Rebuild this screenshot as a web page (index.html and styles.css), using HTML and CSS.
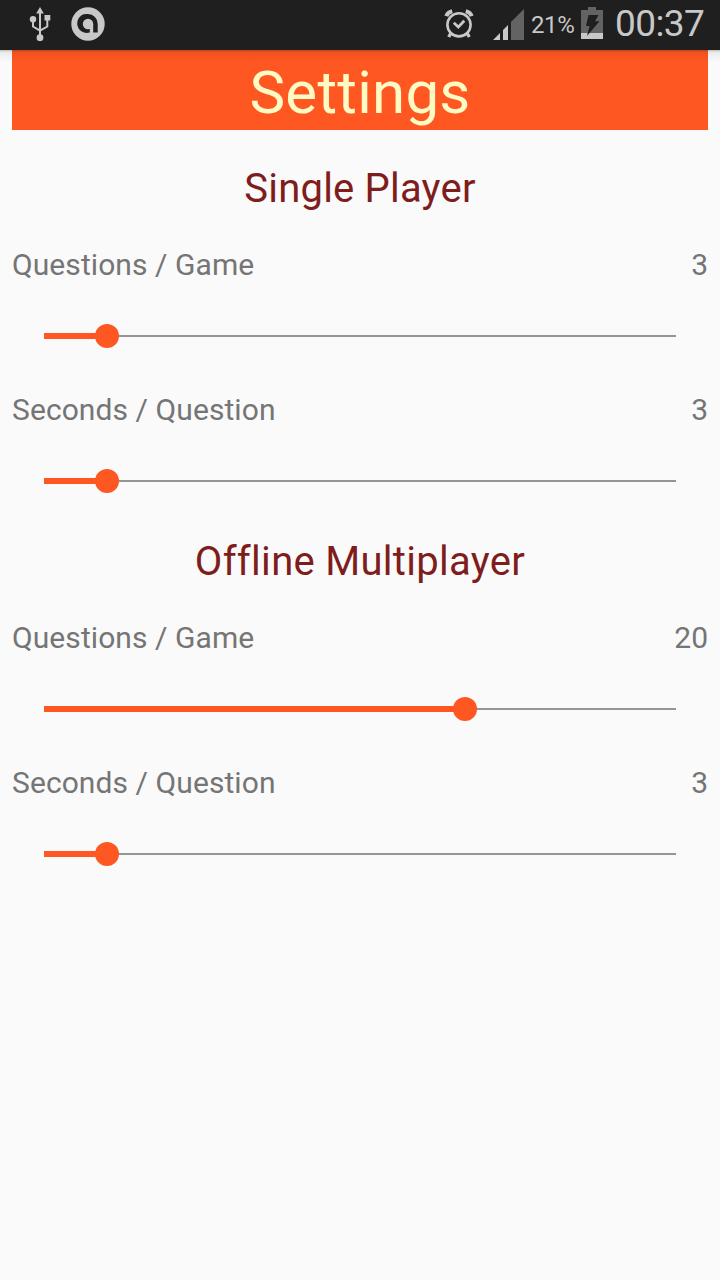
FILE: index.html
```html
<!DOCTYPE html>
<html lang="en">
<head>
<meta charset="utf-8">
<title>Settings</title>
<link rel="stylesheet" href="styles.css">
</head>
<body>
<div class="status-bar">
  <svg class="usb" width="22" height="36" viewBox="0 0 22 36" fill="#c8c8c8">
    <path d="M11 1l3.800 6.500h-7.600z"/>
    <circle cx="4" cy="13.300" r="3.200"/>
    <rect x="15.500" y="9" width="5.800" height="5.500"/>
    <circle cx="11" cy="31.700" r="3.400"/>
    <path d="M11 6v24M4 14v6.500l7 4.200M18.300 13v7.500l-7.300 4.200" fill="none" stroke="#c8c8c8" stroke-width="2"/>
  </svg>
  <svg class="app" width="34" height="34" viewBox="0 0 34 34">
    <circle cx="17" cy="17" r="16.700" fill="#c8c8c8"/>
    <path d="M17 7A9.800 9.800 0 0 1 26.700 17V25.500H18.500A9.500 9.500 0 1 1 17 7z" fill="#1f1f1f"/>
    <circle cx="17" cy="17" r="5.200" fill="#c8c8c8"/>
    <path d="M18.800 17h3.400v10h-3.400z" fill="#c8c8c8"/>
  </svg>
  <div class="spacer"></div>
  <svg class="alarm" width="30" height="30" viewBox="0 0 30 30" fill="none" stroke="#c8c8c8">
    <circle cx="15" cy="15.800" r="11.600" stroke-width="2.600"/>
    <path d="M9.800 13.700l4.500 4.300 6-6.300" stroke-width="2.700"/>
    <path d="M2.300 7.200Q3.500 3.300 8.200 2.100M27.700 7.200Q26.500 3.300 21.800 2.100" stroke-width="4"/>
    <path d="M7 24l-2.300 4M23 24l2.300 4" stroke-width="3.300"/>
  </svg>
  <svg class="signal" width="31" height="32" viewBox="0 0 31 32">
    <path d="M0 31L7 24v7zM10 31V21l5-5v15z" fill="#c8c8c8"/>
    <path d="M18 31V13L31 0v31z" fill="#636363"/>
  </svg>
  <span class="percent">21%</span>
  <svg class="battery" width="22" height="32" viewBox="0 0 22 32">
    <path d="M7 0h8v3h7v23H0V3h7z" fill="#636363"/>
    <path d="M0 26h22v6H0z" fill="#c8c8c8"/>
    <path d="M7.500 8h10l-3.500 6.200h4.500L6 29l2.500-10H5z" fill="#1f1f1f"/>
  </svg>
  <span class="clock">00:37</span>
</div>
<main class="page">
  <h1 class="header">Settings</h1>
  <section class="group">
    <h2 class="title single">Single Player</h2>
    <div class="setting">
      <div class="row"><span class="label">Questions / Game</span><span>3</span></div>
      <div class="slider"><div class="fill" style="width:10%"></div><div class="thumb"></div><div class="track"></div></div>
    </div>
    <div class="setting">
      <div class="row"><span class="label">Seconds / Question</span><span>3</span></div>
      <div class="slider"><div class="fill" style="width:10%"></div><div class="thumb"></div><div class="track"></div></div>
    </div>
  </section>
  <section class="group">
    <h2 class="title offline">Offline Multiplayer</h2>
    <div class="setting">
      <div class="row"><span class="label">Questions / Game</span><span>20</span></div>
      <div class="slider"><div class="fill" style="width:66.667%"></div><div class="thumb"></div><div class="track"></div></div>
    </div>
    <div class="setting">
      <div class="row"><span class="label">Seconds / Question</span><span>3</span></div>
      <div class="slider"><div class="fill" style="width:10%"></div><div class="thumb"></div><div class="track"></div></div>
    </div>
  </section>
</main>
</body>
</html>
```
FILE: styles.css
```css
* { box-sizing: border-box; }
body {
  margin: 0;
  min-height: 1280px;
  background: #fafafa;
  font-family: Roboto, sans-serif;
  font-variant-ligatures: none;
}
.status-bar {
  position: relative;
  display: flex;
  align-items: flex-start;
  height: 50px;
  padding: 0 16px 0 29px;
  background: #1f1f1f;
  color: #c8c8c8;
}
.status-bar::after {
  content: "";
  position: absolute;
  left: 0;
  right: 0;
  top: 50px;
  height: 12px;
  background: linear-gradient(rgba(0,0,0,.24), rgba(0,0,0,.06) 20%, rgba(0,0,0,0));
}
.status-bar svg { flex: none; display: block; }
.usb { margin-top: 6px; }
.app { margin: 7px 0 0 20px; }
.spacer { flex: 1; }
.alarm { margin-top: 9px; }
.signal { margin: 9px 7px 0 19px; }
.percent { width: 50px; font-size: 24px; line-height: 50px; letter-spacing: -.4px; }
.battery { margin-top: 7px; }
.clock {
  width: 90px;
  margin-left: 11px;
  padding-left: 1px;
  font-size: 37px;
  line-height: 48px;
  letter-spacing: -.6px;
  white-space: nowrap;
}
.page { padding: 0 12px; }
.header {
  height: 80px;
  margin: 0 0 32px;
  background: #ff5722;
  color: #fff9c4;
  font-size: 60px;
  font-weight: 400;
  line-height: 85px;
  letter-spacing: .25px;
  text-align: center;
}
.title {
  height: 83px;
  margin: 0;
  color: #7f1d1d;
  font-size: 40px;
  font-weight: 400;
  line-height: 53px;
  text-align: center;
}
.single { letter-spacing: .2px; }
.offline { letter-spacing: .3px; }
.setting { height: 145px; }
.row {
  display: flex;
  justify-content: space-between;
  height: 40px;
  color: #757575;
  font-size: 30px;
  line-height: 40px;
}
.label { letter-spacing: .08px; }
.slider {
  display: flex;
  align-items: center;
  height: 24px;
  margin: 39px 32px 0;
}
.fill { flex: none; height: 6px; background: #ff5722; }
.thumb {
  flex: none;
  width: 24px;
  height: 24px;
  margin: 0 -12px;
  border-radius: 50%;
  background: #ff5722;
  z-index: 1;
}
.track { flex: 1; height: 2px; background: #959595; }
```
